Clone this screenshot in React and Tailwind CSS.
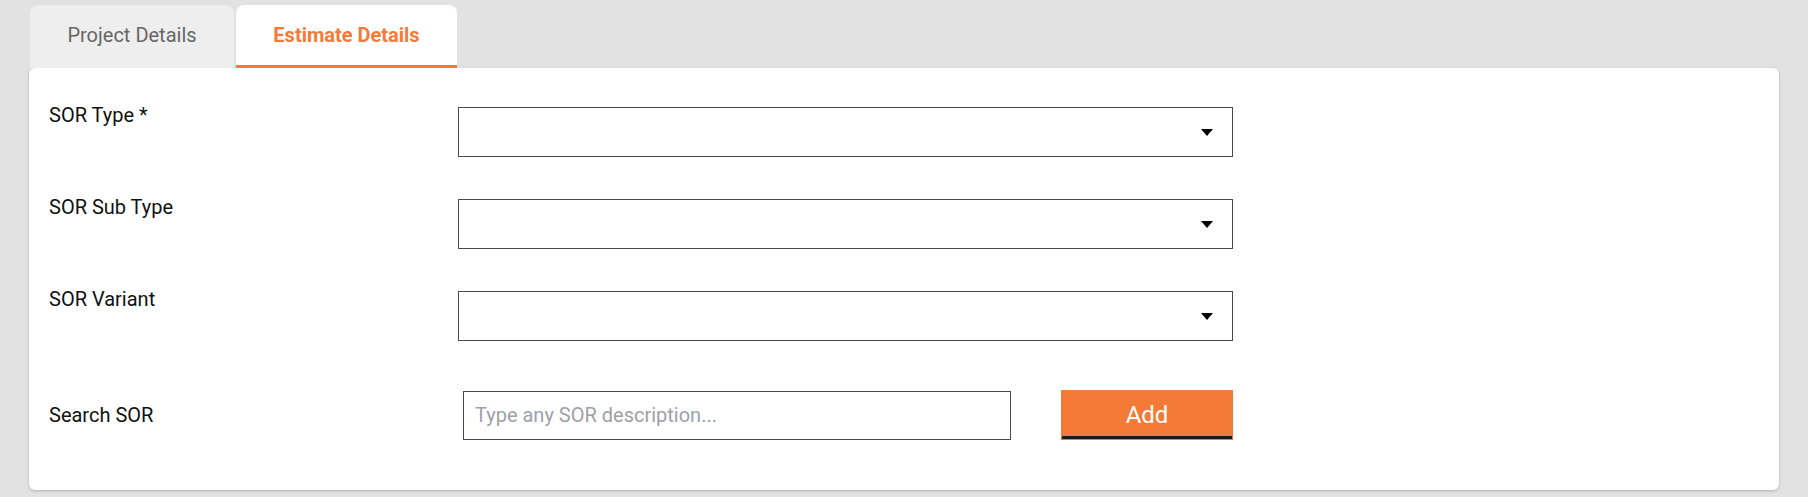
import React, { useState } from "react";

const Caret = () => (
  <svg width="12" height="7" viewBox="0 0 12 7" className="shrink-0">
    <polygon points="0,0 12,0 6,7" fill="#000" />
  </svg>
);

const SelectBox = () => (
  <div className="flex h-[50px] w-[775px] items-center justify-end border border-[#4a4a4a] bg-white pr-[19px]">
    <Caret />
  </div>
);

const fields = ["SOR Type *", "SOR Sub Type", "SOR Variant"];

const App = () => {
  const [activeTab, setActiveTab] = useState("estimate");
  const [query, setQuery] = useState("");

  return (
    <div className="min-h-screen bg-[#e2e2e2] px-[29px] pt-[5px] pb-[7px] font-[Roboto,sans-serif]">
      {/* Tabs */}
      <div className="flex gap-[2px] pl-px">
        <button
          onClick={() => setActiveTab("project")}
          className={`flex h-[63px] w-[204px] items-center justify-center rounded-t-lg text-[20px] ${
            activeTab === "project"
              ? "border-b-[3px] border-[#f47a38] bg-white font-bold text-[#f47a38]"
              : "bg-[#eeeeee] pb-[3px] text-[#666666]"
          }`}
        >
          Project Details
        </button>
        <button
          onClick={() => setActiveTab("estimate")}
          className={`flex h-[63px] w-[221px] items-center justify-center rounded-t-lg text-[20px] ${
            activeTab === "estimate"
              ? "border-b-[3px] border-[#f47a38] bg-white font-bold text-[#f47a38]"
              : "bg-[#eeeeee] pb-[3px] text-[#666666]"
          }`}
        >
          Estimate Details
        </button>
      </div>

      {/* Card */}
      <div className="rounded-md bg-white pt-[39px] pb-[50px] pl-[20px] shadow-[0_1px_3px_rgba(0,0,0,0.22)]">
        <div className="flex flex-col gap-[42px]">
          {fields.map((label) => (
            <div key={label} className="flex items-start">
              <label className="-mt-[4px] w-[409px] text-[20px] leading-[24px] text-[#111111]">
                {label}
              </label>
              <SelectBox />
            </div>
          ))}
        </div>

        <div className="mt-[49px] flex items-center">
          <label className="w-[409px] text-[20px] leading-[24px] text-[#111111]">Search SOR</label>
          <input
            value={query}
            onChange={(e) => setQuery(e.target.value)}
            placeholder="Type any SOR description..."
            className="ml-[5px] h-[49px] w-[548px] border border-[#4a4a4a] px-[11px] text-[20px] text-[#111111] outline-none placeholder:text-[#a0a0a8]"
          />
          <button className="ml-[50px] h-[50px] w-[172px] bg-[#f47a38] p-px text-[24px] text-white">
            <span className="flex h-full w-full items-center justify-center border-b-[3px] border-[#1a1a1a] pt-[3px]">
              Add
            </span>
          </button>
        </div>
      </div>
    </div>
  );
};

export default App;
